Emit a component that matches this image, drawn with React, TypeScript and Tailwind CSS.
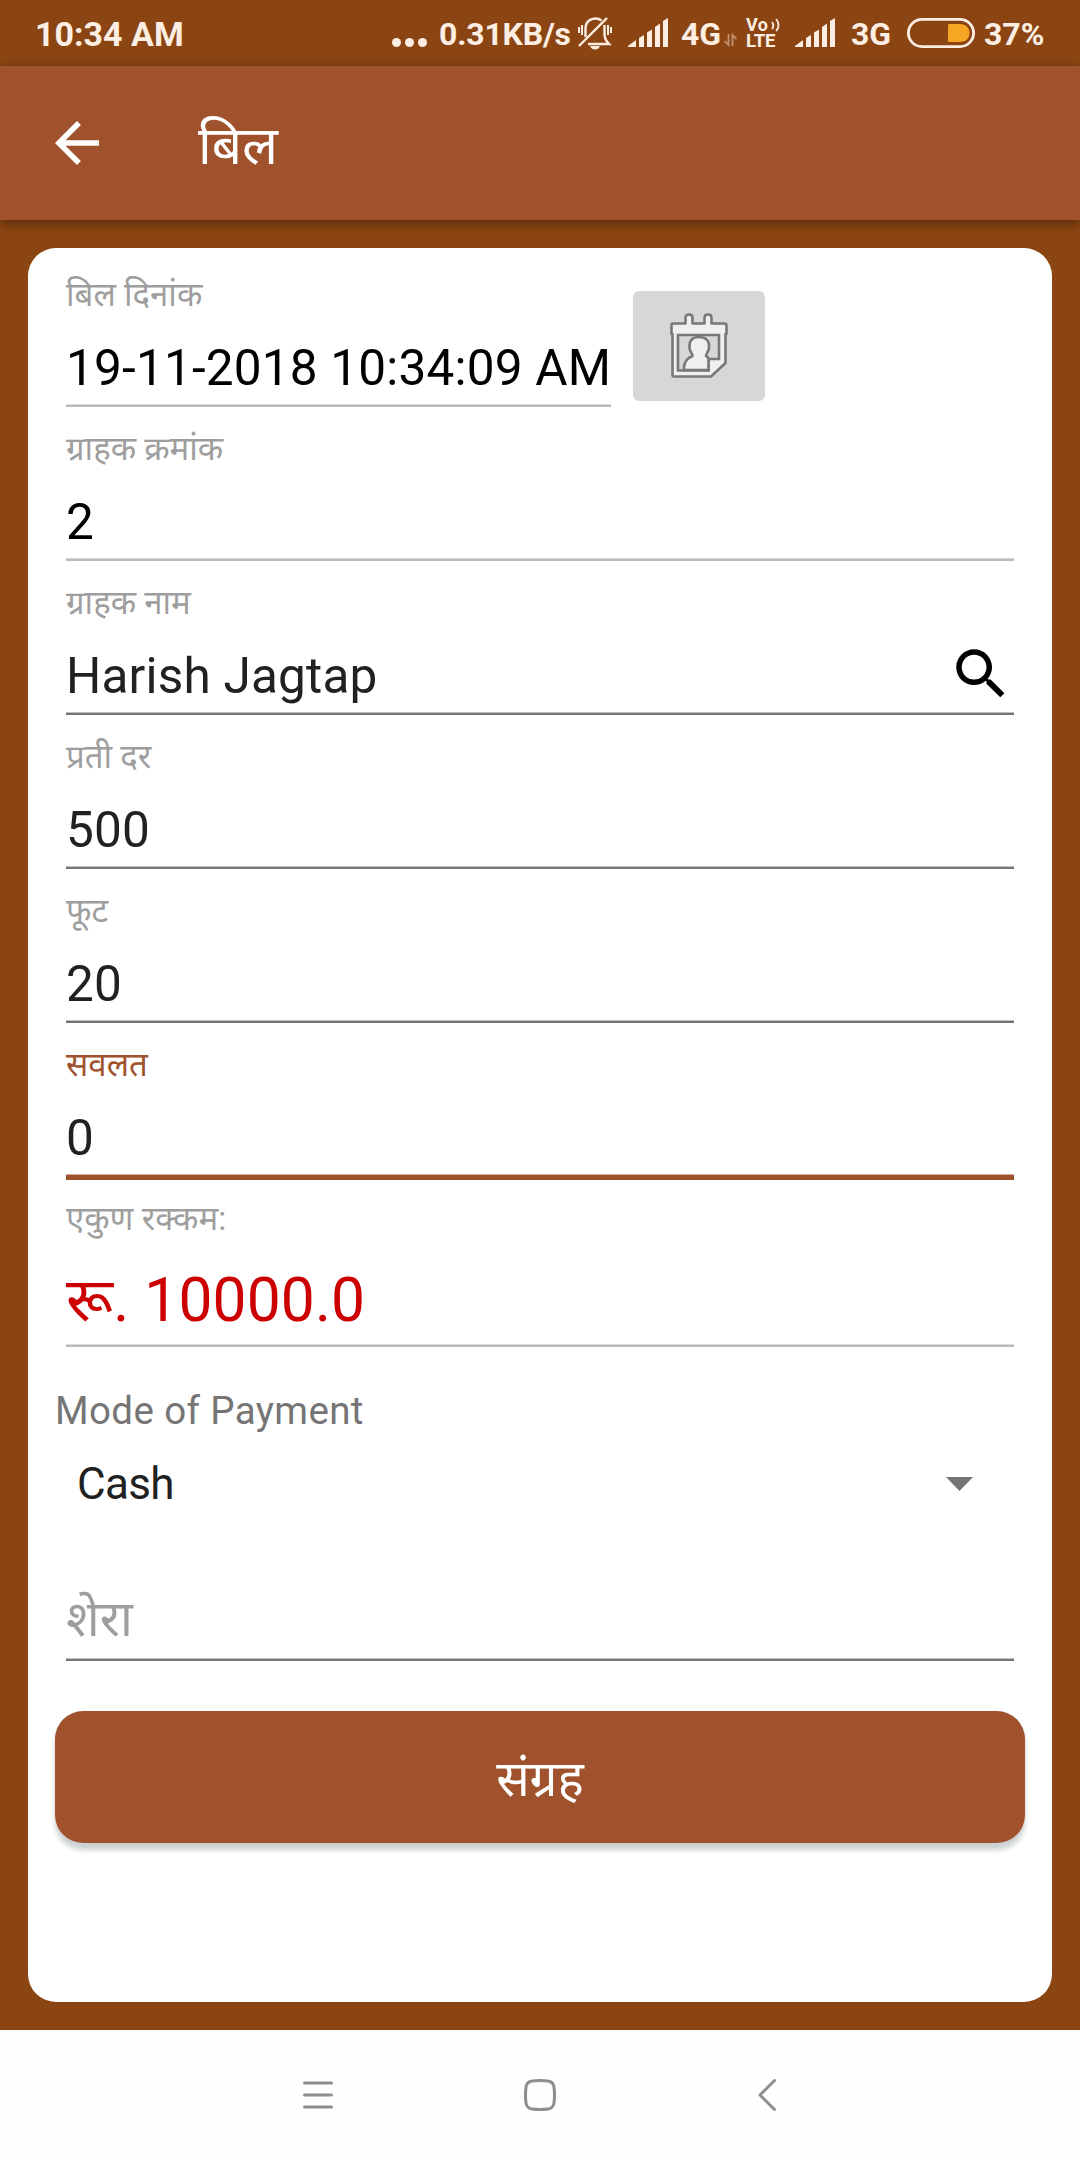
import { useState } from 'react';
import type { ReactNode } from 'react';

type Tone = 'disabled' | 'normal' | 'focused';

const underlineStyles: Record<Tone, string> = {
  disabled: 'bottom-0 h-[3px] bg-[#bababa] border-t border-[#d9d9d9]',
  normal: 'bottom-0 h-[3px] bg-[#757575] border-t border-[#bdbdbd]',
  focused: '-bottom-[3px] h-[6px] bg-[#a0522d] border-t border-[#d3ac99]',
};

const Underline = ({ tone }: { tone: Tone }) => (
  <div className={`absolute inset-x-0 ${underlineStyles[tone]}`} />
);

interface FieldProps {
  label: string;
  value: string;
  tone?: Tone;
  className?: string;
  children?: ReactNode;
}

const Field = ({ label, value, tone = 'normal', className = '', children }: FieldProps) => (
  <div className={`relative flex h-[154px] flex-col pt-3 ${className}`}>
    <label
      className={`text-[33px] leading-[60px] ${tone === 'focused' ? 'text-[#a0522d]' : 'text-[#9e9e9e]'}`}
    >
      {label}
    </label>
    <div className="mt-[13px] flex h-[60px] items-center justify-between">
      <span
        className={`text-[49.5px] leading-[60px] tracking-[0.19px] whitespace-nowrap ${tone === 'disabled' ? 'text-black' : 'text-[#212121]'}`}
      >
        {value}
      </span>
      {children}
    </div>
    <Underline tone={tone} />
  </div>
);

const SignalIcon = () => (
  <svg width="41" height="30" viewBox="0 0 41 30" fill="#fdeee3">
    <path d="M0 29 L0 28 L8 22 V29Z" />
    <path d="M11 20 L16 17 V29 H11Z" />
    <path d="M19 14.5 L24 11.5 V29 H19Z" />
    <path d="M27 9 L32 5.5 V29 H27Z" />
    <path d="M35 3 L40 0 V29 H35Z" />
  </svg>
);

const MutedBellIcon = () => (
  <svg width="34" height="33" viewBox="0 0 34 33" fill="none" stroke="#fdeee3" strokeWidth="2.4">
    <path d="M1 29 L29 1" />
    <path d="M7.5 20 V12 C7.5 4 13 1.5 17.5 1.5 C20 1.5 22 2.3 23.5 3.5" />
    <path d="M26.5 8 V17 C26.5 22 28 24 31 27 H10" />
    <path d="M4 8 V18 M1 10 V16 M30 8 V18 M33 10 V16" strokeWidth="2" />
    <path d="M12 29 H22 C21 31.5 19 32.5 17 32.5 C15 32.5 13 31.5 12 29Z" fill="#fdeee3" stroke="none" />
  </svg>
);

const BatteryIcon = () => (
  <svg width="68" height="30" viewBox="0 0 68 30">
    <rect x="1.4" y="1.4" width="65.200" height="27.200" rx="13.6" fill="none" stroke="#fdeee3" strokeWidth="2.8" />
    <path d="M42.5 6 H53 C59 6 62.5 10 62.5 15 C62.5 20 59 24 53 24 H42.5 C41.5 24 41 23.5 41 22.5 V7.5 C41 6.5 41.5 6 42.5 6Z" fill="#f6a623" />
  </svg>
);

// "Vo" over "LTE", with two sound waves beside the "Vo"
const VolteIcon = () => (
  <div className="flex w-[34px] flex-col gap-[3px] text-[#fdeee3]">
    <div className="flex h-[13px] items-start justify-between">
      <span className="text-[18px] leading-[13px] tracking-[0.5px]">Vo</span>
      <svg width="9" height="14" viewBox="0 0 9 14" fill="none" stroke="#fdeee3" strokeWidth="1.8">
        <path d="M1 4 C2.500 6 2.500 9 1 11" />
        <path d="M5 1 C8.300 4.500 8.300 10 5 13" />
      </svg>
    </div>
    <span className="text-[18.500px] leading-[14px] tracking-[-0.2px]">LTE</span>
  </div>
);

const StatusBar = () => (
  <div className="flex h-[66px] items-start pt-[17px] text-[32px] leading-[34px] font-bold whitespace-nowrap text-[#fdeee3]">
    <div className="ml-[35px] w-[357px] text-[34px] leading-[34px]">10:34 AM</div>
    <svg className="mt-[21px]" width="36" height="9" viewBox="0 0 36 9" fill="#fdeee3">
      <circle cx="4.5" cy="4.5" r="4.5" />
      <circle cx="17.5" cy="4.5" r="4.5" />
      <circle cx="30.5" cy="4.5" r="4.5" />
    </svg>
    <div className="ml-[11px] w-[139px] tracking-[-0.2px]">0.31KB/s</div>
    <div className="w-[50px]">
      <MutedBellIcon />
    </div>
    <div className="w-[53px] pt-[1px]">
      <SignalIcon />
    </div>
    <div className="w-[43px]">4G</div>
    <svg className="mt-[16px] mr-[9px]" width="13" height="14" viewBox="0 0 13 14" fill="none" stroke="#c08f6c" strokeWidth="1.8">
      <path d="M4.500 1 V12 L0.500 8" />
      <path d="M8.500 13 V2 L12.500 6" />
    </svg>
    <div className="w-[49px] pt-[1px]">
      <VolteIcon />
    </div>
    <div className="w-[56px] pt-[1px]">
      <SignalIcon />
    </div>
    <div className="w-[56px]">3G</div>
    <div className="w-[77px] pt-[1px]">
      <BatteryIcon />
    </div>
    <div>37%</div>
  </div>
);

const AppBar = () => (
  <header className="relative flex h-[154px] items-center bg-[#a0522d] shadow-[0_3px_11px_rgba(0,0,0,0.4)]">
    <svg className="ml-[44px]" width="66" height="66" viewBox="0 0 24 24" fill="#fff">
      <path d="M20 11H7.83l5.59-5.59L12 4l-8 8 8 8 1.41-1.41L7.83 13H20v-2z" />
    </svg>
    <h1 className="ml-[88px] pt-[6px] text-[53px] leading-[70px] font-normal text-white">बिल</h1>
  </header>
);

const CalendarIcon = () => (
  <svg width="58" height="66" viewBox="0 0 58 66" stroke="#787878" strokeWidth="2.6" strokeLinejoin="round">
    <path
      d="M2.500 10.500 H15.500 V4.500 Q15.500 1.500 19 1.500 Q22.500 1.500 22.500 4.500 V10.500 H34.500 V4.500 Q34.500 1.500 38 1.500 Q41.500 1.500 41.500 4.500 V10.500 H54.500 Q56.500 10.500 56.500 12.500 V21 H55.500 V50 L41 63.500 H4 Q2.500 63.500 2.500 62 V21 H1.500 V12.500 Q1.500 10.500 2.500 10.500Z"
      fill="#efefef"
    />
    <path d="M8 22 H49 V46 H38.500 V57.500 H8Z" fill="#d6d8d7" strokeLinejoin="miter" />
    <path
      d="M14 57 C13.500 49 17 45 22.500 43 C22.500 40 19 38 19.500 34 C19 27 23 24 29 24 C35 24 39.500 27 39 34 C39.500 38 36 40 36 43 L38.500 45 V57Z"
      fill="#efefef"
    />
  </svg>
);

const BillForm = () => {
  const [mode] = useState('Cash');

  return (
    <main className="mx-[28px] mt-[28px] h-[1754px] rounded-[28px] bg-white pt-[5px]">
      <div className="mx-[38px]">
        <div className="flex items-start">
          <Field
            label="बिल दिनांक"
            value="19-11-2018 10:34:09 AM"
            tone="disabled"
            className="w-[545px]"
          />
          <button className="mt-[38px] ml-[22px] flex h-[110px] w-[132px] items-center justify-center rounded-[6px] bg-[#d6d8d7]">
            <CalendarIcon />
          </button>
        </div>
        <Field label="ग्राहक क्रमांक" value="2" tone="disabled" />
        <Field label="ग्राहक नाम" value="Harish Jagtap">
          <svg className="mb-[4px] h-[66px] w-[66px] shrink-0" viewBox="0 0 24 24" fill="#000">
            <path d="M15.500 14h-.79l-.28-.27C15.410 12.590 16 11.110 16 9.500 16 5.910 13.090 3 9.500 3S3 5.910 3 9.500 5.910 16 9.500 16c1.610 0 3.090-.59 4.230-1.570l.27.28v.79l5 4.990L20.490 19l-4.990-5zm-6 0C7.010 14 5 11.990 5 9.500S7.010 5 9.500 5 14 7.010 14 9.500 11.990 14 9.500 14z" />
          </svg>
        </Field>
        <Field label="प्रती दर" value="500" />
        <Field label="फूट" value="20" />
        <Field label="सवलत" value="0" tone="focused" />

        {/* Total */}
        <div className="relative flex h-[170px] flex-col pt-3">
          <label className="text-[33px] leading-[60px] text-[#9e9e9e]">एकुण रक्कम:</label>
          <span className="mt-[17px] text-[60.5px] leading-[70px] tracking-[0.12px] text-[#cc0000]">रू. 10000.0</span>
          <Underline tone="disabled" />
        </div>
      </div>

      {/* Payment mode */}
      <div className="mt-[39px] ml-[27px] text-[38.5px] leading-[50px] tracking-[0.38px] text-[#757575]">
        Mode of Payment
      </div>
      <div className="mt-[18px] mr-[79px] ml-[49px] flex h-[60px] items-center justify-between">
        <span className="text-[44px] leading-[60px] tracking-[-0.7px] text-[#212121]">{mode}</span>
        <svg width="27" height="14" viewBox="0 0 27 14" fill="#757575">
          <path d="M0 0H27L13.5 14Z" />
        </svg>
      </div>

      <div className="relative mx-[38px] mt-[75px] h-[72px]">
        <div className="text-[49.5px] leading-[60px] text-[#9e9e9e]">शेरा</div>
        <Underline tone="normal" />
      </div>

      <button className="mx-[27px] mt-[50px] flex h-[132px] w-[970px] items-center justify-center rounded-[28px] bg-[#a0522d] pt-[3px] text-[49.5px] leading-[60px] text-white shadow-[0_7px_5px_rgba(70,90,90,0.28)]">
        संग्रह
      </button>
    </main>
  );
};

const NavigationBar = () => (
  <nav className="mt-[28px] flex h-[130px] items-center bg-[#fefefe]">
    <svg className="ml-[303px]" width="30" height="32" viewBox="0 0 30 32" stroke="#8e8e8e" strokeWidth="3" strokeLinecap="round">
      <path d="M1.5 4H28.5M1.5 16H28.5M1.5 28H28.5" />
    </svg>
    <svg className="ml-[191px]" width="32" height="32" viewBox="0 0 32 32" fill="none" stroke="#8e8e8e" strokeWidth="3">
      <path d="M8 2 Q16 1 24 2 Q29 2.500 30 8 Q31 16 30 24 Q29 29.500 24 30 Q16 31 8 30 Q3 29.500 2 24 Q1 16 2 8 Q3 2.500 8 2Z" />
    </svg>
    <svg className="ml-[202px]" width="18" height="32" viewBox="0 0 18 32" fill="none" stroke="#8e8e8e" strokeWidth="3" strokeLinecap="round" strokeLinejoin="round">
      <path d="M16.5 1.5L2 16L16.5 30.5" />
    </svg>
  </nav>
);

const App = () => (
  <div className="h-[2160px] w-[1080px] overflow-hidden bg-[#8b4513] font-['Roboto','Noto_Sans',sans-serif]">
    <StatusBar />
    <AppBar />
    <BillForm />
    <NavigationBar />
  </div>
);

export default App;
